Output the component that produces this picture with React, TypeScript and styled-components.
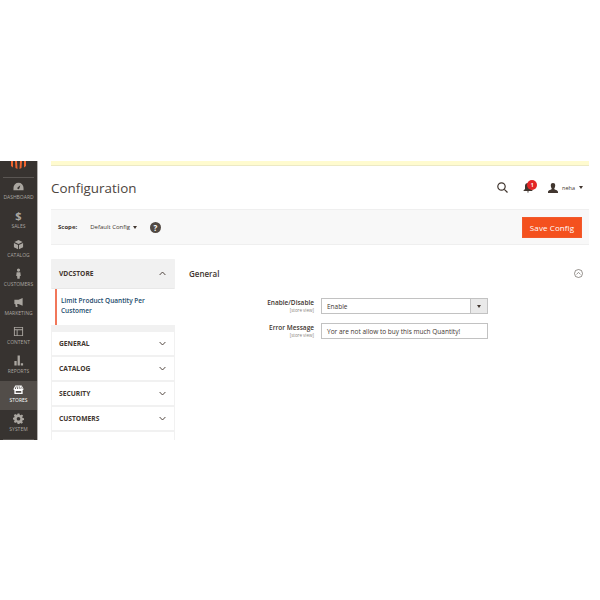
import React from "react";
import styled, { createGlobalStyle } from "styled-components";

const Global = createGlobalStyle`
  html, body { margin: 0; padding: 0; background: #fff; }
  body { font-family: "Open Sans", "Liberation Sans", sans-serif; color: #41362f; }
`;

const Frame = styled.div`
  margin-top: 161px;
  width: 589px;
  height: 279px;
  display: flex;
  overflow: hidden;
`;

const Sidebar = styled.nav`
  width: 37px;
  flex: none;
  background: #373330;
  border-right: 1px solid #b5b3b1;
  display: flex;
  flex-direction: column;
  align-items: stretch;
`;

const LogoBox = styled.div`
  height: 16px;
  flex: none;
  margin: 0 3px;
  border-bottom: 1px solid #5a5653;
  display: flex;
  justify-content: center;
  align-items: flex-start;
  svg { display: block; }
`;

const NavItem = styled.div<{ $active?: boolean }>`
  height: 29px;
  flex: none;
  display: flex;
  flex-direction: column;
  align-items: center;
  justify-content: flex-end;
  padding-bottom: 6px;
  box-sizing: border-box;
  background: ${(p) => (p.$active ? "#524d49" : "transparent")};
  color: ${(p) => (p.$active ? "#fff" : "#aaa6a0")};
  font-size: 5px;
  line-height: 7px;
  text-transform: uppercase;
  svg { display: block; margin-bottom: 2px; }
`;

const NavEnd = styled.div`
  margin: 0 3px;
  border-top: 1px solid #5a5653;
`;

const Dollar = styled.span`
  font-size: 11px;
  line-height: 12px;
  font-weight: 700;
  margin-bottom: 1px;
`;

const Main = styled.main`
  flex: 1;
  min-width: 0;
  padding-left: 13px;
  display: flex;
  flex-direction: column;
`;

const Notice = styled.div`
  height: 4px;
  flex: none;
  background: #fffbcf;
  border-bottom: 1px solid #ece9c4;
`;

const PageHead = styled.header`
  height: 43px;
  flex: none;
  display: flex;
  align-items: center;
  justify-content: space-between;
  padding-right: 6px;
`;

const Title = styled.h1`
  margin: 0;
  font-size: 13.4px;
  font-weight: 400;
  color: #4d4540;
  line-height: 20px;
`;

const Actions = styled.div`
  display: flex;
  align-items: center;
`;

const Bell = styled.div`
  position: relative;
  margin: 0 0 0 15px;
  width: 10px;
  height: 11px;
  svg { display: block; }
`;

const Badge = styled.span`
  position: absolute;
  top: -2px;
  left: 4px;
  width: 10px;
  height: 10px;
  border-radius: 50%;
  background: #e22626;
  color: #fff;
  font-size: 5px;
  font-weight: 700;
  line-height: 10px;
  text-align: center;
`;

const User = styled.div`
  display: flex;
  align-items: center;
  margin-left: 15px;
  font-size: 5.5px;
  color: #41362f;
  gap: 4px;
`;

const Caret = styled.span`
  display: inline-block;
  width: 0;
  height: 0;
  border-left: 2px solid transparent;
  border-right: 2px solid transparent;
  border-top: 3px solid #41362f;
`;

const ScopeBar = styled.div`
  height: 36px;
  flex: none;
  background: #f8f8f8;
  border-top: 1px solid #efefef;
  border-bottom: 1px solid #efefef;
  box-sizing: border-box;
  display: flex;
  align-items: center;
  padding: 0 7px;
`;

const ScopeLabel = styled.span`
  font-size: 6px;
  font-weight: 700;
  color: #41362f;
`;

const ScopeValue = styled.span`
  font-size: 6px;
  color: #41362f;
  margin-left: 13px;
  margin-right: 3px;
`;

const Help = styled.span`
  width: 11px;
  height: 11px;
  border-radius: 50%;
  background: #514943;
  color: #fff;
  font-size: 8px;
  font-weight: 700;
  line-height: 11px;
  text-align: center;
  margin-left: 13px;
`;

const SaveButton = styled.button`
  margin-left: auto;
  width: 60px;
  height: 21px;
  padding: 0;
  border: 1px solid #f2592b;
  background-color: #f4511e;
  color: #fff;
  font-family: inherit;
  font-size: 8px;
  letter-spacing: 0.1px;
`;

const Columns = styled.div`
  display: flex;
  padding-top: 14px;
  flex: 1;
  min-height: 0;
`;

const Tabs = styled.aside`
  width: 124px;
  flex: none;
`;

const TabHead = styled.div`
  display: flex;
  align-items: center;
  justify-content: space-between;
  box-sizing: border-box;
  height: 25px;
  padding: 0 8px 0 7px;
  background: #fff;
  border-left: 1px solid #f1f1f1;
  border-right: 1px solid #f1f1f1;
  border-bottom: 2px solid #f1f1f1;
  font-size: 6.7px;
  font-weight: 700;
  color: #41362f;
  svg { display: block; }
`;

const OpenHead = styled(TabHead)`
  height: 30px;
  background: #f1f1f1;
  border-bottom: 1px solid #e8e8e8;
  border-radius: 1px;
`;

const TabLink = styled.div`
  height: 36px;
  margin-left: 4px;
  box-sizing: border-box;
  border-left: 2px solid #f1775a;
  padding: 7px 10px 0 4px;
  font-size: 6.5px;
  line-height: 10px;
  font-weight: 600;
  color: #1a4a6b;
`;

const Spacer = styled.div`
  height: 7px;
  background: #f1f1f1;
`;

const Content = styled.section`
  flex: 1;
  padding-left: 14px;
  padding-right: 6px;
`;

const SectionHead = styled.div`
  height: 29px;
  display: flex;
  align-items: center;
  justify-content: space-between;
  font-size: 8px;
  font-weight: 600;
  color: #41362f;
  svg { display: block; }
`;

const Fields = styled.div`
  padding-top: 10px;
`;

const FieldRow = styled.div`
  display: flex;
  margin-bottom: 9px;
`;

const Label = styled.div`
  width: 125px;
  text-align: right;
  font-size: 6.5px;
  font-weight: 600;
  line-height: 8px;
  padding-top: 1px;
  color: #41362f;
  small {
    display: block;
    font-size: 4.5px;
    font-weight: 400;
    line-height: 6px;
    color: #8a8580;
  }
`;

const Control = styled.div`
  width: 167px;
  height: 16px;
  margin-left: 7px;
  box-sizing: border-box;
  border: 1px solid #c2c2c2;
  display: flex;
  align-items: center;
  justify-content: space-between;
  padding-left: 5px;
  font-size: 6.5px;
  color: #41362f;
`;

const SelectArrow = styled.span`
  width: 16px;
  height: 100%;
  background: #e9e9e9;
  border-left: 1px solid #c2c2c2;
  display: flex;
  align-items: center;
  justify-content: center;
`;

const Icon = ({ d, size = 11 }: { d: string; size?: number }) => (
  <svg width={size} height={size} viewBox="0 0 24 24" fill="currentColor">
    <path d={d} />
  </svg>
);

const Chevron = ({ up }: { up?: boolean }) => (
  <svg width="7" height="5" viewBox="0 0 7 5" fill="none" stroke="#41362f" strokeWidth="0.9">
    <path d={up ? "M.6 4 3.5 1 6.4 4" : "M.6 1 3.5 4 6.4 1"} />
  </svg>
);

const nav = [
  { label: "Dashboard", d: "M12 4a11 11 0 0 0-11 11v5h22v-5A11 11 0 0 0 12 4Zm0 14a2.500 2.500 0 0 1-1.500-4.500L16 9l-2 7a2.500 2.500 0 0 1-2 2Z" },
  { label: "Sales", dollar: true, d: "" },
  { label: "Catalog", d: "M12 2 3 6.500 12 11l9-4.500L12 2ZM2 8.500V18l9 4.500V13L2 8.500Zm20 0L13 13v9.500l9-4.500V8.500Z" },
  { label: "Customers", d: "M12 1a3.500 3.500 0 1 1 0 7 3.500 3.500 0 0 1 0-7ZM8 9.500h8l1 8h-2l-.5 6h-5l-.5-6H7l1-8Z" },
  { label: "Marketing", d: "M21 2v17l-9-4H9l1 7H6l-1-7H3V6h9l9-4Z" },
  { label: "Content", d: "M2 2h20v20H2V2Zm2 2v3h16V4H4Zm0 5v11h4V9H4Zm6 0v11h10V9H10Z" },
  { label: "Reports", d: "M3 13h5v10H3V13Zm7-12h5v22h-5V1Zm7 17h5v5h-5v-5Z" },
  { label: "Stores", active: true, d: "M5 3h14l4 8a3 3 0 0 1-2 2.800V22H3v-8.200A3 3 0 0 1 1 11l4-8Zm1.500 2L4 11h2l2-6H6.500Zm3.500 0L9 11h2.200l.3-6H10Zm4 0 .3 6H16.500L15 5h-1Zm3.500 0 2 6h1.500L18 5h-.5ZM6 15v4h12v-4H6Z" },
  { label: "System", d: "M10 1h4l.6 3 2.200 1 2.600-1.700 2.800 2.800L20 8.700l1 2.300 3 .500v4l-3 .500-1 2.200 1.700 2.600-2.800 2.800-2.600-1.700-2.200 1L14 24h-4l-.6-3-2.200-1-2.600 1.700-2.800-2.800L3.500 17l-1-2.300-3-.500v-4l3-.500 1-2.200L1.800 5 4.600 2.300 7.200 4l2.200-1L10 1Zm2 7.500a4 4 0 1 0 0 8 4 4 0 0 0 0-8Z" },
];

const groups = ["General", "Catalog", "Security", "Customers"];

export default function App() {
  return (
    <>
      <Global />
      <Frame>
        <Sidebar>
          <LogoBox>
            <svg width="15" height="8" viewBox="0 0 15 8" fill="#f1652f">
              <path d="M0 0 2 0V6.500L0 5ZM4 0 6 0 6.500 8 4.500 7ZM9 0 11 0 10.500 7 8.500 8ZM13 0 15 0 15 5 13 6.500Z" />
            </svg>
          </LogoBox>
          {nav.map((n) => (
            <NavItem key={n.label} $active={n.active}>
              {n.dollar ? <Dollar>$</Dollar> : <Icon d={n.d} />}
              {n.label}
            </NavItem>
          ))}
          <NavEnd />
        </Sidebar>
        <Main>
          <Notice />
          <PageHead>
            <Title>Configuration</Title>
            <Actions>
              <svg width="11" height="11" viewBox="0 0 11 11" fill="none" stroke="#41362f" strokeWidth="1.200">
                <circle cx="4.500" cy="4.500" r="3.700" />
                <path d="M7.300 7.300 10.500 10.500" />
              </svg>
              <Bell>
                <svg width="10" height="11" viewBox="0 0 10 11" fill="#41362f">
                  <path d="M5 1a3 3 0 0 1 3 3v3l1.500 1.500v.500h-9v-.500L2 7V4a3 3 0 0 1 3-3ZM4 9.500h2a1 1 0 0 1-2 0Z" />
                </svg>
                <Badge>1</Badge>
              </Bell>
              <User>
                <svg width="10" height="10" viewBox="0 0 10 10" fill="#41362f">
                  <path d="M5 0a2.200 2.200 0 0 1 2.200 2.500C7.200 4 6.500 5 6.200 5.800c0 1 3.800 1.200 3.800 3.200v1H0V9c0-2 3.800-2.200 3.800-3.200C3.500 5 2.800 4 2.800 2.500A2.200 2.200 0 0 1 5 0Z" />
                </svg>
                neha
                <Caret />
              </User>
            </Actions>
          </PageHead>
          <ScopeBar>
            <ScopeLabel>Scope:</ScopeLabel>
            <ScopeValue>Default Config</ScopeValue>
            <Caret />
            <Help>?</Help>
            <SaveButton>Save Config</SaveButton>
          </ScopeBar>
          <Columns>
            <Tabs>
              <OpenHead>
                VDCSTORE
                <Chevron up />
              </OpenHead>
              <TabLink>Limit Product Quantity Per Customer</TabLink>
              <Spacer />
              {groups.map((g) => (
                <TabHead key={g}>
                  {g.toUpperCase()}
                  <Chevron />
                </TabHead>
              ))}
              <TabHead />
            </Tabs>
            <Content>
              <SectionHead>
                General
                <svg width="9" height="9" viewBox="0 0 9 9" fill="none" stroke="#514943" strokeWidth="0.600">
                  <circle cx="4.500" cy="4.500" r="4" />
                  <path d="M2.500 5.300 4.500 3.500 6.500 5.300" />
                </svg>
              </SectionHead>
              <Fields>
                <FieldRow>
                  <Label>
                    Enable/Disable
                    <small>[store view]</small>
                  </Label>
                  <Control>
                    Enable
                    <SelectArrow>
                      <Caret />
                    </SelectArrow>
                  </Control>
                </FieldRow>
                <FieldRow>
                  <Label>
                    Error Message
                    <small>[store view]</small>
                  </Label>
                  <Control>Yor are not allow to buy this much Quantity!</Control>
                </FieldRow>
              </Fields>
            </Content>
          </Columns>
        </Main>
      </Frame>
    </>
  );
}
